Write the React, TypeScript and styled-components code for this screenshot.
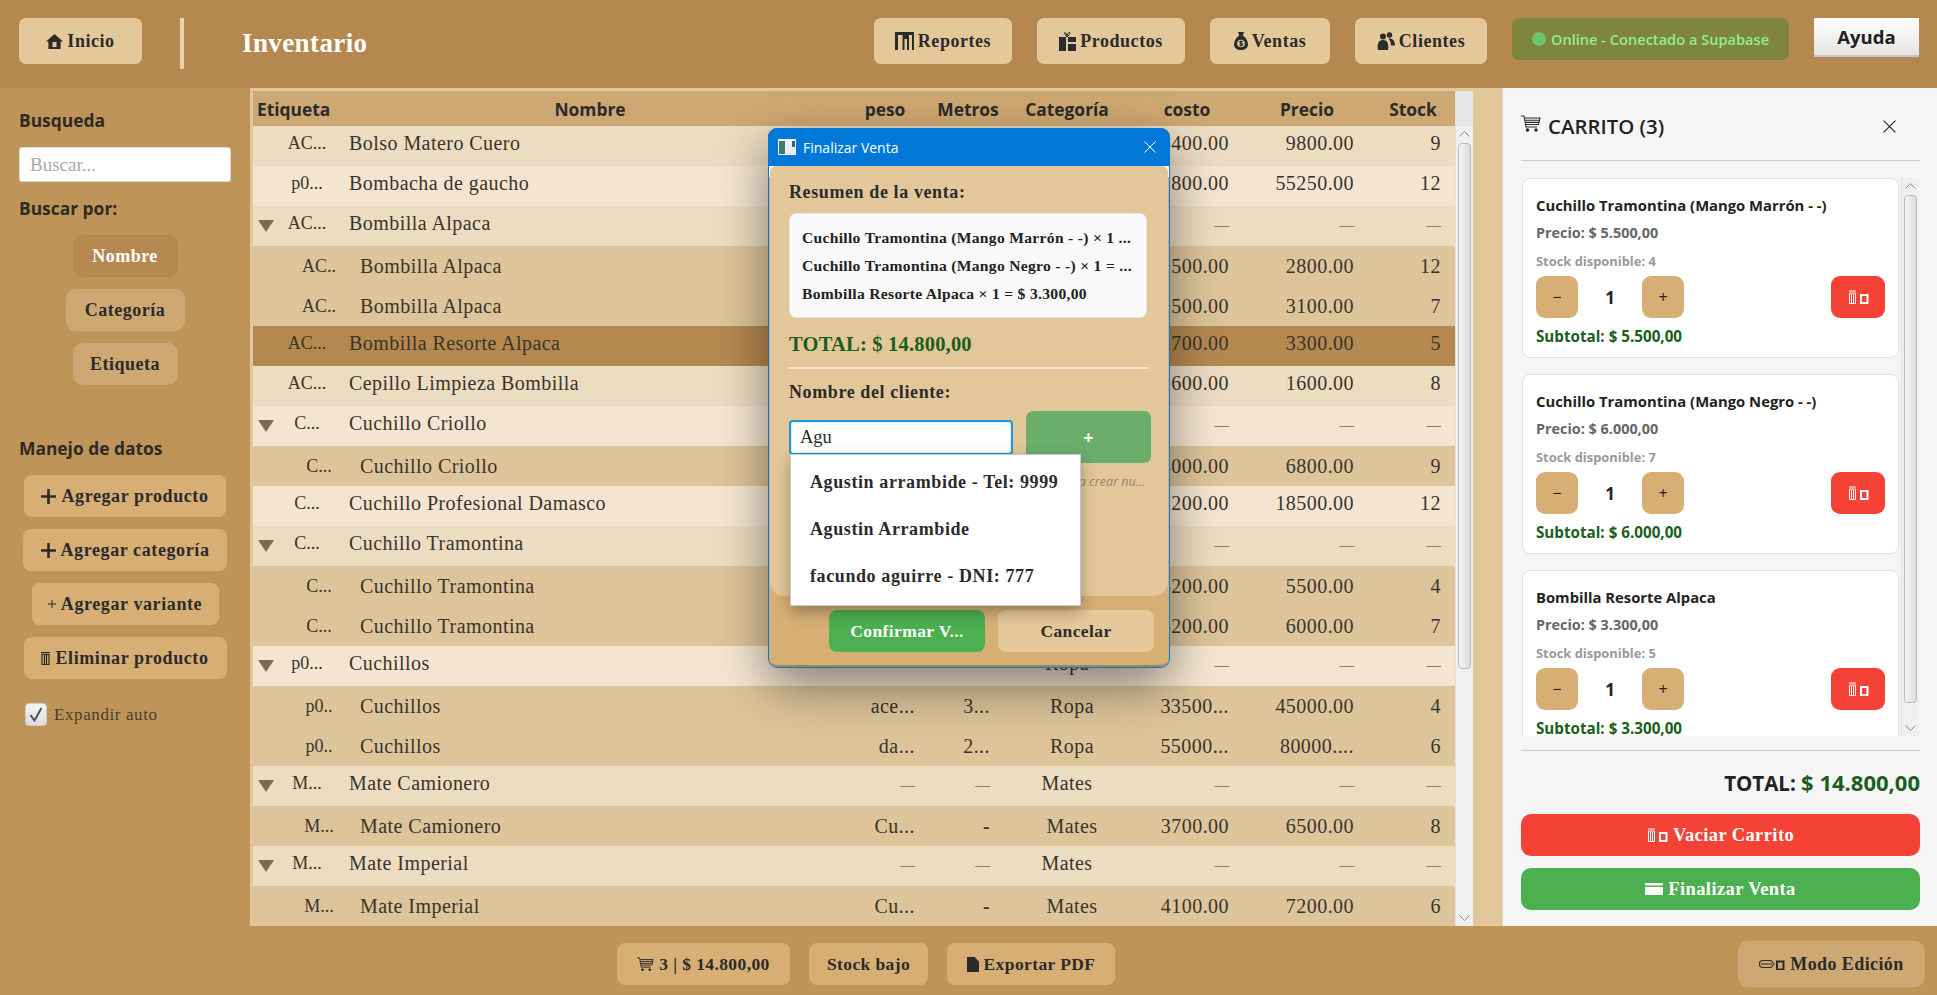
import styled, { createGlobalStyle } from "styled-components";

const serif = `"Liberation Serif", "Times New Roman", serif`;
const sans = `"Open Sans", "Noto Sans", Arial, sans-serif`;

const GlobalStyle = createGlobalStyle`
  html, body {
    margin: 0;
    padding: 0;
    overflow: hidden;
    background: #bf9459;
    font-family: ${serif};
    color: #2b2b2b;
  }
  * { box-sizing: border-box; }
`;

const Page = styled.div`
  position: relative;
  width: 100%;
  height: 995px;
  display: flex;
  flex-direction: column;
`;

/* top bar */
const Header = styled.header`
  height: 88px;
  flex: none;
  display: flex;
  align-items: flex-start;
  padding: 18px 18px 0 19px;
  background: #b58850;
  gap: 25px;
`;

const HeaderButton = styled.button<{ $w: number }>`
  width: ${(p) => p.$w}px;
  height: 46px;
  flex: none;
  border: none;
  border-radius: 7px;
  background: #e5c89a;
  color: #2b2b2b;
  font: 700 18px ${serif};
  letter-spacing: 0.55px;
  display: flex;
  align-items: center;
  justify-content: center;
  gap: 4px;
`;

const Separator = styled.div`
  width: 4px;
  height: 51px;
  flex: none;
  margin-left: 13px;
  background: #e8d3ae;
`;

const Title = styled.h1`
  margin: 9px auto 0 33px;
  font: 700 27px/32px ${serif};
  letter-spacing: 0.4px;
  color: #fff;
`;

const StatusPill = styled.div`
  width: 277px;
  height: 42px;
  flex: none;
  border-radius: 7px;
  background: #7f853c;
  color: #90ee90;
  font: 600 14.6px ${sans};
  display: flex;
  align-items: center;
  justify-content: center;
  gap: 5px;
`;

const StatusDot = styled.span`
  width: 14px;
  height: 14px;
  border-radius: 50%;
  background: #6fc46f;
`;

const HelpButton = styled.button`
  width: 105px;
  height: 39px;
  flex: none;
  border: none;
  border-bottom: 2px solid #c8c8c8;
  background: linear-gradient(#ffffff, #e4e4e4);
  color: #222;
  font: 700 18.5px ${sans};
`;

/* main area */
const Main = styled.main`
  flex: 1;
  min-height: 0;
  display: flex;
`;

const Sidebar = styled.aside`
  width: 250px;
  flex: none;
  background: #bf9459;
  padding: 20px 19px 0;
  display: flex;
  flex-direction: column;
`;

const SideLabel = styled.div<{ $top?: number }>`
  font: 700 17.4px/24px ${sans};
  color: #2e2a25;
  margin-top: ${(p) => p.$top ?? 0}px;
`;

const SearchInput = styled.input`
  width: 212px;
  height: 35px;
  margin-top: 15px;
  padding: 0 10px;
  border: 1px solid #d9d9d9;
  border-radius: 3px;
  background: #fff;
  font: 19px ${serif};
  &::placeholder { color: #aaa; }
`;

const SideStack = styled.div<{ $gap: number; $top: number }>`
  display: flex;
  flex-direction: column;
  align-items: center;
  gap: ${(p) => p.$gap}px;
  margin-top: ${(p) => p.$top}px;
  margin-left: -19px;
  width: 250px;
`;

const FilterButton = styled.button<{ $active?: boolean; $w: number }>`
  width: ${(p) => p.$w}px;
  height: 42px;
  border: none;
  border-radius: 10px;
  background: ${(p) => (p.$active ? "#b58850" : "#cea872")};
  color: ${(p) => (p.$active ? "#fff" : "#2b2b2b")};
  font: 700 18px ${serif};
  letter-spacing: 0.5px;
`;

const ActionButton = styled.button<{ $w: number }>`
  width: ${(p) => p.$w}px;
  height: 42px;
  border: none;
  border-radius: 8px;
  background: #d7af75;
  color: #2b2b2b;
  font: 700 18px ${serif};
  letter-spacing: 0.6px;
  display: flex;
  align-items: center;
  justify-content: center;
  gap: 5px;
`;

const CheckRow = styled.label`
  display: flex;
  align-items: center;
  gap: 7px;
  margin: 24px 0 0 6px;
  font: 17px ${serif};
  letter-spacing: 0.6px;
  color: #4a3d2c;
`;

const CheckBox = styled.span`
  width: 22px;
  height: 23px;
  border: 1px solid #ccc;
  border-radius: 4px;
  background: linear-gradient(#f6f6f6, #dcdcdc);
  display: flex;
  align-items: center;
  justify-content: center;
`;

/* products table */
const TablePanel = styled.section`
  flex: 1;
  min-width: 0;
  display: flex;
  background: #e3c79a;
  padding: 3px 29px 0 3px;
`;

const TableArea = styled.div`
  width: 1202px;
  flex: none;
  display: flex;
  flex-direction: column;
`;

const HeadRow = styled.div`
  height: 35px;
  flex: none;
  background: #cea872;
  display: grid;
  grid-template-columns: 77px 520px 70px 96px 102px 138px 102px 97px;
  align-items: center;
  font: 700 17.4px ${sans};
  color: #2b2b2b;
  text-align: center;
`;

const HeadTag = styled.span`
  text-align: left;
  padding-left: 4px;
`;

const HeadStock = styled.span`
  padding-left: 13px;
`;

const Row = styled.div<{ $tone: string; $kind: string }>`
  height: 40px;
  flex: none;
  background: ${(p) => p.$tone};
  display: grid;
  grid-template-columns: 96px 501px 65px 75px 154px 85px 125px 87px;
  align-items: center;
  padding-bottom: ${(p) => (p.$kind === "child" ? 0 : 5)}px;
  font: 20px ${serif};
  letter-spacing: 0.45px;
  color: #3a342c;
`;

const TagCell = styled.div`
  display: flex;
  align-items: center;
  padding-left: 5px;
`;

const Toggle = styled.span<{ $show: boolean }>`
  width: 0;
  height: 0;
  flex: none;
  margin-top: 5px;
  border-left: 8px solid transparent;
  border-right: 8px solid transparent;
  border-top: 12px solid ${(p) => (p.$show ? "#7b6b57" : "transparent")};
`;

const TagText = styled.span<{ $child: boolean }>`
  width: 42px;
  margin-left: ${(p) => (p.$child ? 24 : 12)}px;
  text-align: center;
  font-size: 18px;
  letter-spacing: 0;
`;

const NameCell = styled.div<{ $child: boolean }>`
  padding-left: ${(p) => (p.$child ? 11 : 0)}px;
`;

const NumCell = styled.div`
  text-align: right;
`;

const CatCell = styled.div<{ $child: boolean }>`
  text-align: center;
  padding-left: ${(p) => (p.$child ? 10 : 0)}px;
`;

const Dash = styled.span`
  font-size: 14.5px;
  font-weight: 700;
  letter-spacing: 0;
  color: #8d7f6c;
`;

const Hyphen = styled.span`
  font-weight: 700;
`;

const ScrollBar = styled.div<{ $w: number }>`
  width: ${(p) => p.$w}px;
  flex: none;
  display: flex;
  flex-direction: column;
  align-items: center;
  background: #f0f0f0;
  border-left: 1px solid #e2e2e2;
`;

const ScrollCap = styled.div`
  width: 100%;
  height: 35px;
  background: #e6e6e6;
`;

const ScrollArrow = styled.div`
  height: 16px;
  flex: none;
  display: flex;
  align-items: center;
  justify-content: center;
`;

const ScrollThumb = styled.div<{ $h: number }>`
  width: 13px;
  height: ${(p) => p.$h}px;
  flex: none;
  margin-top: 1px;
  border: 1px solid #b9b9b9;
  border-radius: 4px;
  background: linear-gradient(90deg, #f4f4f4, #dedede);
`;

const ScrollGap = styled.div`
  flex: 1;
`;

/* cart */
const CartPanel = styled.aside`
  width: 435px;
  flex: none;
  background: #f5f5f5;
  border-left: 1px solid #d4d4d4;
  padding: 0 17px 0 18px;
  display: flex;
  flex-direction: column;
`;

const CartHead = styled.div`
  height: 73px;
  flex: none;
  border-bottom: 1px solid #cfcfcf;
  display: flex;
  align-items: center;
  padding: 4px 24px 0 0;
  gap: 7px;
`;

const CartHeadIcon = styled.span`
  margin-bottom: 5px;
`;

const CartTitle = styled.h2`
  margin: 0 auto 0 0;
  font: 600 20.4px ${sans};
  color: #222;
`;

const CartBody = styled.div`
  height: 558px;
  flex: none;
  margin-top: 17px;
  display: flex;
  gap: 2px;
  overflow: hidden;
`;

const CardList = styled.div`
  width: 378px;
  flex: none;
  display: flex;
  flex-direction: column;
  gap: 16px;
  padding-left: 1px;
  overflow: hidden;
`;

const Card = styled.article`
  height: 180px;
  flex: none;
  background: #fff;
  border: 1px solid #e0e0e0;
  border-radius: 8px;
  padding: 14px 13px 0;
  font-family: ${sans};
`;

const CardTitle = styled.div`
  font: 700 14.8px/24px ${sans};
  color: #222;
`;

const CardPrice = styled.div`
  margin-top: 4px;
  font: 700 14.4px/24px ${sans};
  color: #666;
`;

const CardStock = styled.div`
  margin-top: 4px;
  font: 700 12.9px/24px ${sans};
  color: #999;
`;

const QtyRow = styled.div`
  display: flex;
  align-items: center;
  margin-top: 3px;
`;

const QtyButton = styled.button`
  width: 42px;
  height: 42px;
  border: none;
  border-radius: 9px;
  background: #d7af75;
  color: #222;
  font: 400 16px ${sans};
`;

const QtyValue = styled.span`
  width: 64px;
  text-align: center;
  font: 700 17px ${sans};
  color: #222;
`;

const DeleteButton = styled.button`
  width: 54px;
  height: 42px;
  margin-left: auto;
  border: none;
  border-radius: 9px;
  background: #f44336;
  display: flex;
  align-items: center;
  justify-content: center;
`;

const Subtotal = styled.div`
  margin-top: 6px;
  font: 700 15.2px/24px ${sans};
  color: #1b5e20;
`;

const CartFoot = styled.div`
  margin-top: 14px;
  border-top: 1px solid #cfcfcf;
  display: flex;
  flex-direction: column;
`;

const CartTotal = styled.div`
  margin-top: 16px;
  text-align: right;
  font: 700 20.5px/30px ${sans};
  color: #222;
`;

const CartAmount = styled.span`
  font-size: 22px;
  color: #1b5e20;
`;

const CartWide = styled.button<{ $bg: string; $top: number }>`
  height: 42px;
  margin-top: ${(p) => p.$top}px;
  border: none;
  border-radius: 10px;
  background: ${(p) => p.$bg};
  color: #fff;
  font: 700 18.5px ${serif};
  letter-spacing: 0.4px;
  display: flex;
  align-items: center;
  justify-content: center;
  gap: 5px;
`;

/* bottom bar */
const Footer = styled.footer`
  height: 69px;
  flex: none;
  background: #bf9459;
  display: flex;
  align-items: center;
  padding: 7px 12px 0 0;
`;

const FooterGroup = styled.div`
  flex: 1;
  display: flex;
  justify-content: center;
  gap: 19px;
  padding-right: 6px;
`;

const FooterButton = styled.button<{ $w: number }>`
  width: ${(p) => p.$w}px;
  height: 42px;
  border: none;
  border-radius: 8px;
  background: #d7af75;
  color: #2b2b2b;
  font: 700 17.5px ${serif};
  letter-spacing: 0.4px;
  display: flex;
  align-items: center;
  justify-content: center;
  gap: 5px;
`;

const EditButton = styled(FooterButton)`
  height: 46px;
  border-radius: 10px;
  background: #cea872;
  font-size: 18px;
`;

/* sale dialog */
const Dialog = styled.div`
  position: absolute;
  left: 768px;
  top: 128px;
  width: 402px;
  height: 540px;
  display: flex;
  flex-direction: column;
  border: 1px solid #0078d7;
  border-radius: 9px;
  background: linear-gradient(#fff 0 48px, #d7af75 48px);
  box-shadow: 0 18px 50px rgba(0, 0, 0, 0.45);
`;

const DialogBar = styled.div`
  height: 38px;
  flex: none;
  margin: -1px -1px 0;
  padding: 0 14px 0 10px;
  border-radius: 9px 9px 0 0;
  background: #0078d7;
  color: #fff;
  font: 14px ${sans};
  display: flex;
  align-items: center;
  gap: 7px;
`;

const DialogName = styled.span`
  margin-right: auto;
`;

const DialogBody = styled.div`
  height: 430px;
  flex: none;
  margin: 0 1px;
  padding: 14px 19px 0 19px;
  border-radius: 6px 6px 14px 14px;
  background: #e3c79a;
`;

const DialogLabel = styled.div`
  font: 700 18px/24px ${serif};
  letter-spacing: 0.6px;
  color: #2b2b2b;
`;

const SummaryBox = styled.div`
  width: 358px;
  height: 105px;
  margin-top: 9px;
  padding: 10px 12px 0;
  border: 1px solid #e6e6e6;
  border-radius: 7px;
  background: #f9f9f9;
`;

const SummaryLine = styled.div`
  font: 700 15.6px/28px ${serif};
  letter-spacing: 0.3px;
  color: #222;
  white-space: nowrap;
  overflow: hidden;
`;

const DialogTotal = styled.div`
  margin-top: 12px;
  font: 700 20.5px/28px ${serif};
  letter-spacing: 0.2px;
  color: #1b5e20;
`;

const DialogRule = styled.div`
  height: 2px;
  margin-top: 9px;
  background: #eee6d8;
`;

const ClientLabel = styled(DialogLabel)`
  margin-top: 11px;
`;

const ClientRow = styled.div`
  position: relative;
  display: flex;
  align-items: center;
  gap: 13px;
  margin-top: 7px;
`;

const ClientInput = styled.input`
  width: 224px;
  height: 35px;
  padding: 0 9px;
  border: 2px solid #1e9bd1;
  border-radius: 4px;
  background: #fff;
  box-shadow: inset 0 0 0 1px #d8eefa;
  font: 18.5px ${serif};
  color: #2b2b2b;
`;

const AddButton = styled.button`
  width: 125px;
  height: 52px;
  flex: none;
  border: none;
  border-radius: 7px;
  background: #6bad6b;
  color: #fff;
  font: 700 18px ${sans};
`;

const Suggestions = styled.ul`
  position: absolute;
  left: 1px;
  top: 43px;
  width: 291px;
  height: 152px;
  margin: 0;
  padding: 0;
  list-style: none;
  background: #fff;
  border: 1px solid #c9c9c9;
  box-shadow: 0 6px 14px rgba(0, 0, 0, 0.3);
`;

const Suggestion = styled.li`
  height: 47px;
  padding: 8px 0 0 19px;
  display: flex;
  align-items: center;
  font: 700 18px ${serif};
  letter-spacing: 0.6px;
  color: #2b2b2b;
`;

const Hint = styled.div`
  margin-top: 10px;
  width: 356px;
  text-align: right;
  font: italic 12.5px ${sans};
  color: #94866f;
`;

const DialogFoot = styled.div`
  flex: 1;
  display: flex;
  gap: 13px;
  padding: 14px 0 0 60px;
  border-bottom: 2px solid #a8834e;
  border-radius: 0 0 9px 9px;
`;

const DialogButton = styled.button<{ $primary?: boolean }>`
  width: 156px;
  height: 42px;
  border: none;
  border-radius: 8px;
  background: ${(p) => (p.$primary ? "#4caf50" : "#e5c89a")};
  color: ${(p) => (p.$primary ? "#fff" : "#2b2b2b")};
  font: 700 17.5px ${serif};
  letter-spacing: 0.4px;
`;

const Svg = styled.svg`
  flex: none;
  display: block;
`;

const HomeIcon = () => (
  <Svg width="17" height="15" viewBox="0 0 17 15">
    <path fill="#2b2b2b" d="M8.5 0 17 7.5h-2.4V15H2.4V7.5H0z" />
    <rect x="6.5" y="8" width="4" height="5" fill="#e5c89a" />
  </Svg>
);

const ChartIcon = () => (
  <Svg width="19" height="18" viewBox="0 0 19 18">
    <path fill="#2b2b2b" d="M0 0h19v18h-2V3h-3v15h-2V7H9.500v11h-2V3H3v15H0z" />
  </Svg>
);

const GiftIcon = () => (
  <Svg width="17" height="19" viewBox="0 0 17 19">
    <path fill="none" stroke="#2b2b2b" strokeWidth="1" d="M8 5C6 3 5 .5 6 .5S8 3 8 5c0-2 1-4.500 2.500-4.500S10.500 3 8 5" />
    <path fill="#2b2b2b" d="M0 5h7v14H0zM9 5h8v5H9zM9 12h8v7H9z" />
  </Svg>
);

const MoneyBagIcon = () => (
  <Svg width="14" height="18" viewBox="0 0 14 18">
    <path fill="#2b2b2b" d="M4 0h6L8.800 3.500C12 5.500 14 9 14 12.500 14 16 11 18 7 18s-7-2-7-5.500C0 9 2 5.500 5.200 3.500z" />
    <circle cx="7" cy="11.500" r="3.800" fill="#e5c89a" />
    <path fill="none" stroke="#2b2b2b" strokeWidth="1.200" d="M8.500 10C8 9 5.500 9.200 5.800 10.500c.2 1 2.700.7 2.800 2 .1 1.200-2.500 1.300-3 .3M7 8.500v6" />
  </Svg>
);

const PeopleIcon = () => (
  <Svg width="18" height="18" viewBox="0 0 18 18">
    <circle cx="6" cy="4.500" r="3" fill="#2b2b2b" />
    <circle cx="12.500" cy="3" r="2.700" fill="#2b2b2b" />
    <path fill="#2b2b2b" d="M1 18c-1-5 0-10 5-10s6 5 5 10zM11.500 6.500c4-.5 6.500 2 6.500 7h-4c0-3-1-5-2.500-7" />
  </Svg>
);

const CartIcon = ({ size = 20, color = "#2b2b2b" }: { size?: number; color?: string }) => (
  <Svg width={size} height={size * 0.85} viewBox="0 0 20 17" fill="none" stroke={color} strokeWidth="1.100">
    <path d="M0 1h3l2 11h11" />
    <path d="M3.600 3H19l-1.500 6.500H4.800M4.200 5.200h14.300M4.500 7.400h13.500" />
    <circle cx="6.500" cy="15" r="1.200" fill={color} />
    <circle cx="15" cy="15" r="1.200" fill={color} />
  </Svg>
);

// trash glyph followed by the empty box of the variation selector
const TrashIcon = ({ color = "#fff" }: { color?: string }) => (
  <Svg width="21" height="14" viewBox="0 0 21 14" fill="none" stroke={color}>
    <path d="M1 1h7M1.500 3h6v10.500h-6zM3.500 4v9M5.500 4v9" strokeWidth="1" />
    <rect x="13" y="5" width="6.500" height="8" strokeWidth="2" />
  </Svg>
);

const SmallTrashIcon = () => (
  <Svg width="9" height="13" viewBox="0 0 9 13" fill="none" stroke="#2b2b2b">
    <path d="M0 .7h9M1 2.500h7v10H1zM3.500 3v9M5.500 3v9" strokeWidth="1.200" />
  </Svg>
);

const PlusIcon = () => (
  <Svg width="15" height="15" viewBox="0 0 15 15">
    <path fill="#2b2b2b" d="M6.200 0h2.600v6.200H15v2.600H8.800V15H6.200V8.800H0V6.200h6.200z" />
  </Svg>
);

const ThinPlusIcon = () => (
  <Svg width="8" height="8" viewBox="0 0 8 8">
    <path fill="#2b2b2b" d="M3.500 0h1v3.500H8v1H4.500V8h-1V4.500H0v-1h3.500z" />
  </Svg>
);

const CardIcon = () => (
  <Svg width="18" height="12" viewBox="0 0 18 12">
    <path fill="#fff" d="M1 0h16a1 1 0 0 1 1 1v1.500H0V1a1 1 0 0 1 1-1zM0 4h18v7a1 1 0 0 1-1 1H1a1 1 0 0 1-1-1z" />
  </Svg>
);

const PageIcon = () => (
  <Svg width="12" height="15" viewBox="0 0 12 15">
    <path fill="#2b2b2b" d="M0 0h7.500L12 4.500V15H0z" />
  </Svg>
);

const PencilIcon = () => (
  <Svg width="26" height="12" viewBox="0 0 26 12" fill="none" stroke="#2b2b2b">
    <path d="M4 2.500h8l3 3.500-3 3.500H4C1 9.500 .5 8 .5 6S1 2.500 4 2.500zM2 6h11" strokeWidth="1.100" />
    <rect x="18" y="3.500" width="6.500" height="8" strokeWidth="2" />
  </Svg>
);

const WindowIcon = () => (
  <Svg width="18" height="16" viewBox="0 0 18 16">
    <rect width="18" height="16" fill="#eef3f5" />
    <rect x="1" y="2" width="6" height="13" fill="#3c7a78" />
    <rect x="8" y="2" width="9" height="13" fill="#e8eef0" />
    <rect x="14" y="2" width="3" height="6" fill="#3c6470" />
  </Svg>
);

const CloseIcon = ({ size, color }: { size: number; color: string }) => (
  <Svg width={size} height={size} viewBox="0 0 12 12" fill="none" stroke={color} strokeWidth="1">
    <path d="M.5.5l11 11M11.500.5l-11 11" />
  </Svg>
);

const CheckMark = () => (
  <Svg width="14" height="15" viewBox="0 0 14 15" fill="none" stroke="#4a5560" strokeWidth="2">
    <path d="M1.500 8 5.500 13.500 12.500 1" />
  </Svg>
);

const ChevronUp = () => (
  <Svg width="11" height="6" viewBox="0 0 11 6" fill="none" stroke="#8a8a8a">
    <path d="M.5 5.500l5-5 5 5" />
  </Svg>
);

const ChevronDown = () => (
  <Svg width="11" height="6" viewBox="0 0 11 6" fill="none" stroke="#8a8a8a">
    <path d="M.5.500l5 5 5-5" />
  </Svg>
);

const LIGHT = "#ecdcc2";
const PALE = "#f5e5d0";
const TAN = "#ddc49a";
const PICKED = "#b58850";

type ProductRow = {
  tag: string;
  name: string;
  kind: "item" | "group" | "child";
  tone: string;
  peso?: string;
  metros?: string;
  cat?: string;
  costo?: string;
  precio?: string;
  stock?: string;
};

const rows: ProductRow[] = [
  { tag: "AC...", name: "Bolso Matero Cuero", kind: "item", tone: LIGHT, peso: "Cu...", metros: "-", cat: "Accesorios", costo: "6400.00", precio: "9800.00", stock: "9" },
  { tag: "p0...", name: "Bombacha de gaucho", kind: "item", tone: PALE, peso: "-", metros: "-", cat: "Ropa", costo: "32800.00", precio: "55250.00", stock: "12" },
  { tag: "AC...", name: "Bombilla Alpaca", kind: "group", tone: LIGHT, cat: "Accesorios" },
  { tag: "AC..", name: "Bombilla Alpaca", kind: "child", tone: TAN, peso: "-", metros: "-", cat: "Accesorios", costo: "1500.00", precio: "2800.00", stock: "12" },
  { tag: "AC..", name: "Bombilla Alpaca", kind: "child", tone: TAN, peso: "-", metros: "-", cat: "Accesorios", costo: "1500.00", precio: "3100.00", stock: "7" },
  { tag: "AC...", name: "Bombilla Resorte Alpaca", kind: "item", tone: PICKED, peso: "-", metros: "-", cat: "Accesorios", costo: "1700.00", precio: "3300.00", stock: "5" },
  { tag: "AC...", name: "Cepillo Limpieza Bombilla", kind: "item", tone: LIGHT, peso: "-", metros: "-", cat: "Accesorios", costo: "600.00", precio: "1600.00", stock: "8" },
  { tag: "C...", name: "Cuchillo Criollo", kind: "group", tone: PALE, cat: "Cuchillos" },
  { tag: "C...", name: "Cuchillo Criollo", kind: "child", tone: TAN, peso: "-", metros: "-", cat: "Cuchillos", costo: "4000.00", precio: "6800.00", stock: "9" },
  { tag: "C...", name: "Cuchillo Profesional Damasco", kind: "item", tone: PALE, peso: "-", metros: "-", cat: "Cuchillos", costo: "11200.00", precio: "18500.00", stock: "12" },
  { tag: "C...", name: "Cuchillo Tramontina", kind: "group", tone: LIGHT, cat: "Cuchillos" },
  { tag: "C...", name: "Cuchillo Tramontina", kind: "child", tone: TAN, peso: "-", metros: "-", cat: "Cuchillos", costo: "3200.00", precio: "5500.00", stock: "4" },
  { tag: "C...", name: "Cuchillo Tramontina", kind: "child", tone: TAN, peso: "-", metros: "-", cat: "Cuchillos", costo: "3200.00", precio: "6000.00", stock: "7" },
  { tag: "p0...", name: "Cuchillos", kind: "group", tone: PALE, cat: "Ropa" },
  { tag: "p0..", name: "Cuchillos", kind: "child", tone: TAN, peso: "ace...", metros: "3...", cat: "Ropa", costo: "33500...", precio: "45000.00", stock: "4" },
  { tag: "p0..", name: "Cuchillos", kind: "child", tone: TAN, peso: "da...", metros: "2...", cat: "Ropa", costo: "55000...", precio: "80000....", stock: "6" },
  { tag: "M...", name: "Mate Camionero", kind: "group", tone: LIGHT, cat: "Mates" },
  { tag: "M...", name: "Mate Camionero", kind: "child", tone: TAN, peso: "Cu...", metros: "-", cat: "Mates", costo: "3700.00", precio: "6500.00", stock: "8" },
  { tag: "M...", name: "Mate Imperial", kind: "group", tone: LIGHT, cat: "Mates" },
  { tag: "M...", name: "Mate Imperial", kind: "child", tone: TAN, peso: "Cu...", metros: "-", cat: "Mates", costo: "4100.00", precio: "7200.00", stock: "6" },
];

const cartItems = [
  { name: "Cuchillo Tramontina (Mango Marrón - -)", price: "5.500,00", stock: 4 },
  { name: "Cuchillo Tramontina (Mango Negro - -)", price: "6.000,00", stock: 7 },
  { name: "Bombilla Resorte Alpaca", price: "3.300,00", stock: 5 },
];

const cell = (value?: string) => {
  if (!value) return <Dash>—</Dash>;
  if (value === "-") return <Hyphen>-</Hyphen>;
  return value;
};

const App = () => {
  return (
    <Page>
      <GlobalStyle />
      <Header>
        <HeaderButton $w={123}>
          <HomeIcon /> Inicio
        </HeaderButton>
        <Separator />
        <Title>Inventario</Title>
        <HeaderButton $w={138}>
          <ChartIcon /> Reportes
        </HeaderButton>
        <HeaderButton $w={148}>
          <GiftIcon /> Productos
        </HeaderButton>
        <HeaderButton $w={120}>
          <MoneyBagIcon /> Ventas
        </HeaderButton>
        <HeaderButton $w={132}>
          <PeopleIcon /> Clientes
        </HeaderButton>
        <StatusPill>
          <StatusDot /> Online - Conectado a Supabase
        </StatusPill>
        <HelpButton>Ayuda</HelpButton>
      </Header>

      <Main>
        <Sidebar>
          <SideLabel>Busqueda</SideLabel>
          <SearchInput placeholder="Buscar..." />
          <SideLabel $top={14}>Buscar por:</SideLabel>
          <SideStack $gap={12} $top={15}>
            <FilterButton $active $w={105}>Nombre</FilterButton>
            <FilterButton $w={119}>Categoría</FilterButton>
            <FilterButton $w={105}>Etiqueta</FilterButton>
          </SideStack>
          <SideLabel $top={51}>Manejo de datos</SideLabel>
          <SideStack $gap={12} $top={15}>
            <ActionButton $w={202}>
              <PlusIcon /> Agregar producto
            </ActionButton>
            <ActionButton $w={204}>
              <PlusIcon /> Agregar categoría
            </ActionButton>
            <ActionButton $w={187}>
              <ThinPlusIcon /> Agregar variante
            </ActionButton>
            <ActionButton $w={203}>
              <SmallTrashIcon /> Eliminar producto
            </ActionButton>
          </SideStack>
          <CheckRow>
            <CheckBox>
              <CheckMark />
            </CheckBox>
            Expandir auto
          </CheckRow>
        </Sidebar>

        <TablePanel>
          <TableArea>
            <HeadRow>
              <HeadTag>Etiqueta</HeadTag>
              <span>Nombre</span>
              <span>peso</span>
              <span>Metros</span>
              <span>Categoría</span>
              <span>costo</span>
              <span>Precio</span>
              <HeadStock>Stock</HeadStock>
            </HeadRow>
            {rows.map((r, i) => (
              <Row key={i} $tone={r.tone} $kind={r.kind}>
                <TagCell>
                  <Toggle $show={r.kind === "group"} />
                  <TagText $child={r.kind === "child"}>{r.tag}</TagText>
                </TagCell>
                <NameCell $child={r.kind === "child"}>{r.name}</NameCell>
                <NumCell>{cell(r.peso)}</NumCell>
                <NumCell>{cell(r.metros)}</NumCell>
                <CatCell $child={r.kind === "child"}>{r.cat}</CatCell>
                <NumCell>{cell(r.costo)}</NumCell>
                <NumCell>{cell(r.precio)}</NumCell>
                <NumCell>{cell(r.stock)}</NumCell>
              </Row>
            ))}
          </TableArea>
          <ScrollBar $w={18}>
            <ScrollCap />
            <ScrollArrow>
              <ChevronUp />
            </ScrollArrow>
            <ScrollThumb $h={526} />
            <ScrollGap />
            <ScrollArrow>
              <ChevronDown />
            </ScrollArrow>
          </ScrollBar>
        </TablePanel>

        <CartPanel>
          <CartHead>
            <CartHeadIcon>
              <CartIcon />
            </CartHeadIcon>
            <CartTitle>CARRITO (3)</CartTitle>
            <CloseIcon size={13} color="#222" />
          </CartHead>
          <CartBody>
            <CardList>
              {cartItems.map((item) => (
                <Card key={item.name}>
                  <CardTitle>{item.name}</CardTitle>
                  <CardPrice>Precio: $ {item.price}</CardPrice>
                  <CardStock>Stock disponible: {item.stock}</CardStock>
                  <QtyRow>
                    <QtyButton>−</QtyButton>
                    <QtyValue>1</QtyValue>
                    <QtyButton>+</QtyButton>
                    <DeleteButton>
                      <TrashIcon />
                    </DeleteButton>
                  </QtyRow>
                  <Subtotal>Subtotal: $ {item.price}</Subtotal>
                </Card>
              ))}
            </CardList>
            <ScrollBar $w={18}>
              <ScrollArrow>
                <ChevronUp />
              </ScrollArrow>
              <ScrollThumb $h={508} />
              <ScrollGap />
              <ScrollArrow>
                <ChevronDown />
              </ScrollArrow>
            </ScrollBar>
          </CartBody>
          <CartFoot>
            <CartTotal>
              TOTAL: <CartAmount>$ 14.800,00</CartAmount>
            </CartTotal>
            <CartWide $bg="#f44336" $top={16}>
              <TrashIcon /> Vaciar Carrito
            </CartWide>
            <CartWide $bg="#4caf50" $top={12}>
              <CardIcon /> Finalizar Venta
            </CartWide>
          </CartFoot>
        </CartPanel>
      </Main>

      <Footer>
        <FooterGroup>
          <FooterButton $w={173}>
            <CartIcon size={17} /> 3 | $ 14.800,00
          </FooterButton>
          <FooterButton $w={119}>Stock bajo</FooterButton>
          <FooterButton $w={168}>
            <PageIcon /> Exportar PDF
          </FooterButton>
        </FooterGroup>
        <EditButton $w={187}>
          <PencilIcon /> Modo Edición
        </EditButton>
      </Footer>

      <Dialog>
        <DialogBar>
          <WindowIcon />
          <DialogName>Finalizar Venta</DialogName>
          <CloseIcon size={12} color="#fff" />
        </DialogBar>
        <DialogBody>
          <DialogLabel>Resumen de la venta:</DialogLabel>
          <SummaryBox>
            <SummaryLine>Cuchillo Tramontina (Mango Marrón - -) × 1 ...</SummaryLine>
            <SummaryLine>Cuchillo Tramontina (Mango Negro - -) × 1 = ...</SummaryLine>
            <SummaryLine>Bombilla Resorte Alpaca × 1 = $ 3.300,00</SummaryLine>
          </SummaryBox>
          <DialogTotal>TOTAL: $ 14.800,00</DialogTotal>
          <DialogRule />
          <ClientLabel>Nombre del cliente:</ClientLabel>
          <ClientRow>
            <ClientInput defaultValue="Agu" />
            <AddButton>+</AddButton>
            <Suggestions>
              <Suggestion>Agustin arrambide - Tel: 9999</Suggestion>
              <Suggestion>Agustin Arrambide</Suggestion>
              <Suggestion>facundo aguirre - DNI: 777</Suggestion>
            </Suggestions>
          </ClientRow>
          <Hint>Seleccione uno o presione + para crear nu...</Hint>
        </DialogBody>
        <DialogFoot>
          <DialogButton $primary>Confirmar V...</DialogButton>
          <DialogButton>Cancelar</DialogButton>
        </DialogFoot>
      </Dialog>
    </Page>
  );
};

export default App;
